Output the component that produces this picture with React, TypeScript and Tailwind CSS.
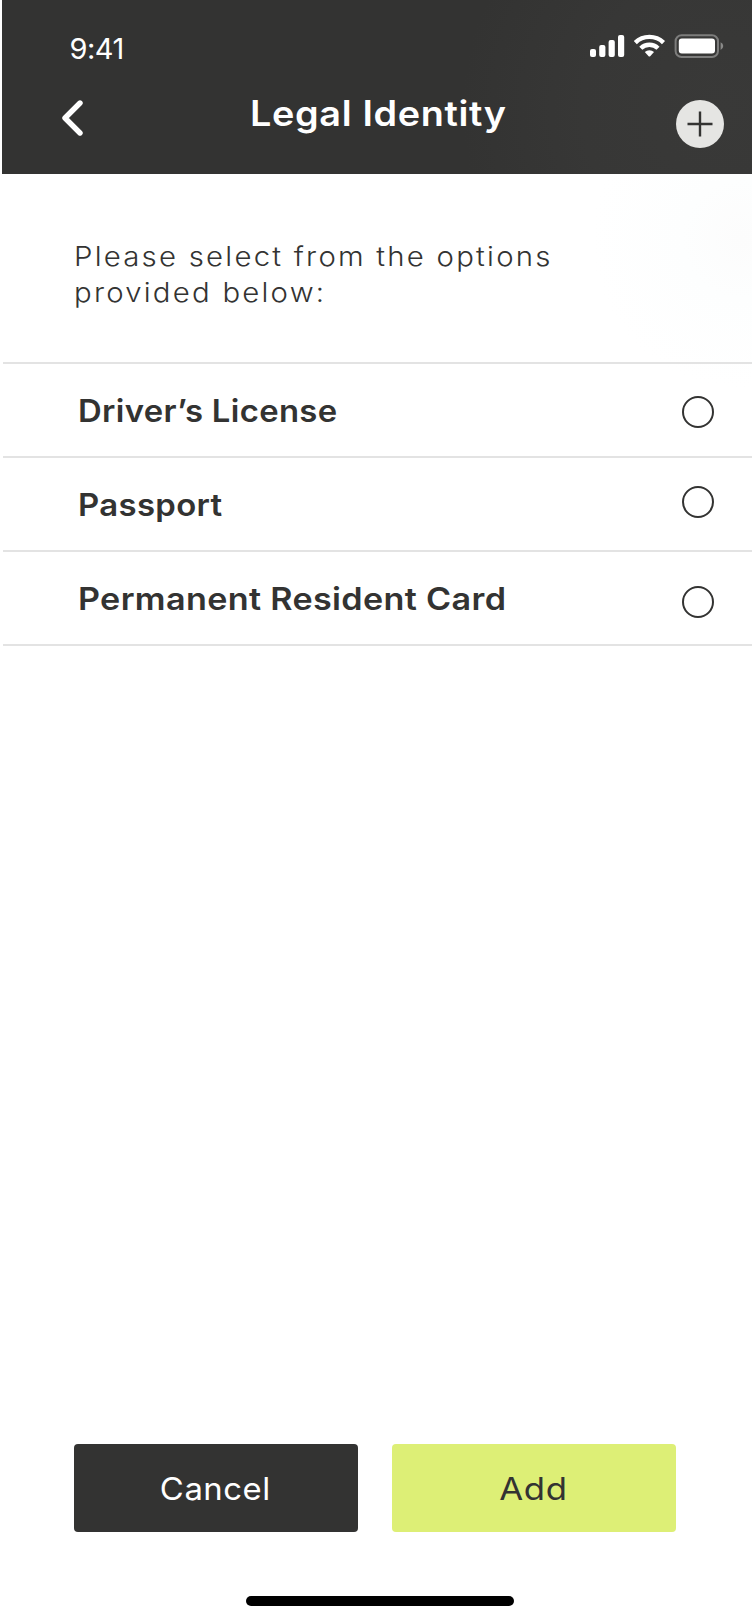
import { useState } from "react";

const options = [
  { label: "Driver’s License", text: "scale-x-[1.06]", radio: "mt-8" },
  { label: "Passport", text: "scale-x-[1.062]", radio: "mt-7" },
  { label: "Permanent Resident Card", text: "scale-x-[1.102]", radio: "mt-[34px]" },
];

function StatusIcons() {
  return (
    <svg width="134" height="24" viewBox="0 0 134 24" className="mt-[34px]" fill="none" aria-hidden="true">
      <g fill="#fff">
        <rect x="0" y="15" width="6" height="8" rx="2" />
        <rect x="9.2" y="11" width="6.2" height="12" rx="2" />
        <rect x="18.6" y="6" width="6.2" height="17" rx="2" />
        <rect x="28" y="1" width="6.2" height="22" rx="2" />
      </g>
      <g stroke="#fff" strokeWidth="4.4">
        <path d="M45.3 8.6a20.2 20.2 0 0 1 28.2 0" />
        <path d="M50.8 14.2a12.3 12.3 0 0 1 17.2 0" />
      </g>
      <path d="M54.8 18a6.6 6.6 0 0 1 9.2 0l-3.8 4.2q-.8.8-1.6 0Z" fill="#fff" />
      <rect x="85.6" y="1.2" width="42.4" height="21.8" rx="6" stroke="#7d7d7c" strokeWidth="2" />
      <rect x="88.8" y="4.4" width="36.2" height="15" rx="3" fill="#fff" />
      <path d="M130.6 8.2a4.2 4.2 0 0 1 0 7.8Z" fill="#8a8a89" />
    </svg>
  );
}

export default function App() {
  const [selected, setSelected] = useState<string | null>(null);
  return (
    <main className="flex h-[1624px] w-[754px] flex-col bg-white px-[2px] font-['Inter',sans-serif] text-[#333332]">
      <header className="h-[174px] shrink-0 bg-[#333332] bg-[radial-gradient(circle_at_720px_110px,#393938_0,#373736_140px,#333332_260px)] text-white">
        <div className="flex h-[100px] justify-between pr-[28px] pl-[67.5px]">
          <span className="mt-[31px] text-[29px] leading-[36px] tracking-[-0.5px]">9:41</span>
          <StatusIcons />
        </div>
        <div className="flex h-12 items-start justify-between pr-[28px] pl-[60px]">
          <button aria-label="Back" className="w-[48px]">
            <svg width="22" height="36" viewBox="0 0 22 36" fill="none">
              <path d="M18 3 3 18 18 33" stroke="#fff" strokeWidth="5.4" strokeLinecap="round" strokeLinejoin="round" />
            </svg>
          </button>
          <h1 className="mr-[48px] origin-left scale-x-[1.08] text-[35px] leading-[27px] font-semibold tracking-[0.6px] whitespace-nowrap">
            Legal Identity
          </h1>
          <button aria-label="New" className="flex size-12 items-center justify-center rounded-full bg-[#e5e5e3]">
            <svg width="26" height="26" viewBox="0 0 26 26">
              <path d="M.5 13h25M13 .5v25" stroke="#333332" strokeWidth="2.4" />
            </svg>
          </button>
        </div>
      </header>

      <div className="flex grow flex-col bg-[radial-gradient(circle_at_740px_65px,#fcfcfc_0,#fdfefe_60px,#ffffff_150px)]">
        <p className="ml-[71.5px] h-[188px] w-fit origin-left scale-x-[1.087] pt-[65px] text-[27px] leading-9 font-light tracking-[2.05px]">
          Please select from the options
          <br />
          provided below:
        </p>

        <div role="radiogroup" className="ml-px border-t-2 border-[#e3e3e3]">
          {options.map((o) => (
            <button
              key={o.label}
              role="radio"
              aria-checked={selected === o.label}
              onClick={() => setSelected(o.label)}
              className="flex h-[94px] w-full items-start justify-between border-b-2 border-[#e3e3e3] pr-[38px] pl-[75px] text-left"
            >
              <span className={`mt-[27px] origin-left text-[31px] leading-10 font-semibold tracking-[0.3px] ${o.text}`}>{o.label}</span>
              <span className={`flex size-8 items-center justify-center rounded-full border-2 border-[#333332] ${o.radio}`}>
                {selected === o.label && <span className="size-4 rounded-full bg-[#333332]" />}
              </span>
            </button>
          ))}
        </div>

        <div className="mt-auto flex gap-[34px] pl-[72px]">
          <button className="h-[88px] w-[284px] rounded bg-[#333332] pt-[2px] pr-px text-[31px] font-normal text-white">
            <span className="inline-block scale-x-[1.06] tracking-[0.5px]">Cancel</span>
          </button>
          <button className="h-[88px] w-[284px] rounded bg-[#ddef76] pt-[2px] pr-[2px] text-[31px] font-normal">
            <span className="inline-block scale-x-[1.12] tracking-[0.5px]">Add</span>
          </button>
        </div>
        <div className="mt-16 mb-[18px] ml-[244px] h-[10px] w-[268px] shrink-0 rounded-full bg-black" />
      </div>
    </main>
  );
}
